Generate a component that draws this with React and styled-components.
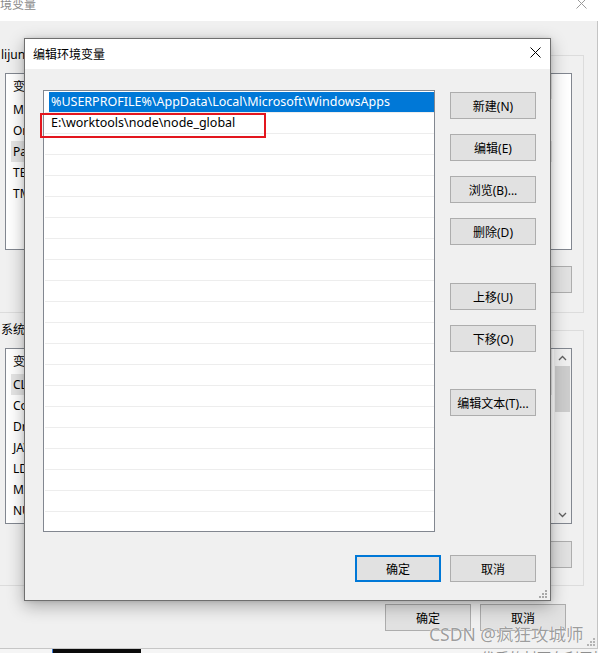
import React from 'react';
import styled, { createGlobalStyle } from 'styled-components';

const GlobalStyle = createGlobalStyle`
  html, body { margin: 0; padding: 0; background: #f0f0f0; }
  body {
    font-family: "Noto Sans", "Noto Sans CJK SC", sans-serif;
    font-size: 12px;
    color: #000;
  }
  #root { width: 598px; height: 653px; }
  * { box-sizing: border-box; }
`;

const Screen = styled.div`
  position: relative;
  width: 598px;
  height: 653px;
  overflow: hidden;
  display: flex;
  flex-direction: column;
  background: #f0f0f0;
`;

/* ---------- background window ---------- */
const BgWindow = styled.div`
  position: relative;
  height: 649px;
  flex: none;
  display: flex;
  flex-direction: column;
  border-bottom: 1px solid #c6c6c6;
  background: #f0f0f0;
`;

const BgTitleBar = styled.div`
  height: 21px;
  flex: none;
  background: #fff;
  display: flex;
  justify-content: space-between;
  align-items: flex-start;
  overflow: hidden;
`;

const BgTitleText = styled.div`
  margin-top: -3px;
  font-family: "Noto Sans CJK SC", sans-serif;
  font-size: 12px;
  line-height: 14px;
  color: #8a8a8a;
`;

const BgClose = styled.svg`
  margin-top: -2px;
  margin-right: 11px;
`;

const BgBody = styled.div`
  flex: 1;
  display: flex;
  flex-direction: column;
  padding-right: 13px;
  border-right: 1px solid #c4c4c4;
`;

const Group = styled.fieldset`
  margin: ${(p) => p.$mt}px 0 0 -10px;
  padding: 10px 11px ${(p) => p.$pb}px 14px;
  border: 1px solid #dcdcdc;
  min-inline-size: 0;
`;

const GroupLabel = styled.legend`
  padding: 0 2px;
  margin-left: -6px;
  font-size: 12px;
  line-height: 16px;
  white-space: nowrap;
`;

const BgList = styled.div`
  height: ${(p) => p.$h}px;
  border: 1px solid #828790;
  background: #fff;
  display: flex;
  overflow: hidden;
`;

const BgRows = styled.div`
  flex: 1;
  padding-left: 5px;
  display: flex;
  flex-direction: column;
  overflow: hidden;
`;

const BgHeader = styled.div`
  height: 25px;
  display: flex;
  flex: none;
`;

const HeaderCell = styled.div`
  width: ${(p) => p.$w}px;
  flex: none;
  padding-left: 2px;
  line-height: 25px;
  border-right: 1px solid #e5e5e5;
  white-space: nowrap;
`;

const BgRow = styled.div`
  height: 21px;
  flex: none;
  display: flex;
  align-items: center;
  width: 541px;
  background: ${(p) => (p.$sel ? '#e5e5e5' : 'transparent')};
`;

const BgCell = styled.div`
  width: ${(p) => p.$w}px;
  flex: none;
  padding-left: 2px;
  white-space: nowrap;
  overflow: hidden;
`;

const Scrollbar = styled.div`
  width: 17px;
  flex: none;
  background: #f0f0f0;
  display: flex;
  flex-direction: column;
  align-items: center;
`;

const ScrollArrow = styled.div`
  height: 17px;
  flex: none;
  display: flex;
  align-items: center;
  justify-content: center;
`;

const ScrollThumb = styled.div`
  width: 15px;
  height: 46px;
  flex: none;
  background: #cdcdcd;
`;

const ScrollTrack = styled.div`
  flex: 1;
`;

const BgButtonRow = styled.div`
  margin-top: ${(p) => p.$mt}px;
  display: flex;
  justify-content: flex-end;
  gap: 9px;
`;

const WinButton = styled.button`
  width: ${(p) => p.$w || 86}px;
  height: 27px;
  padding: 0;
  background: #e1e1e1;
  border: ${(p) => (p.$default ? '2px solid #0078d7' : '1px solid #adadad')};
  border-radius: 0;
  font-family: "Noto Sans", "Noto Sans CJK SC", sans-serif;
  font-size: 12px;
  color: #000;
  white-space: nowrap;
  margin-top: ${(p) => p.$mt || 0}px;
`;

const BgFooter = styled.div`
  margin-top: 18px;
  padding-right: 18px;
  display: flex;
  justify-content: flex-end;
  gap: 9px;
`;

/* ---------- bottom strip ---------- */
const BottomStrip = styled.div`
  flex: 1;
  display: flex;
  background: #f5f5f5;
  padding-left: 52px;
  overflow: hidden;
`;

const DarkBlock = styled.div`
  width: 89px;
  flex: none;
  background: #0b0b0b;
  border-left: 1px solid #3a7bd5;
`;

const HintText = styled.div`
  margin-left: 340px;
  margin-top: 0px;
  font-family: "Noto Sans CJK SC", sans-serif;
  font-size: 14px;
  line-height: 16px;
  color: #8e8e8e;
  white-space: nowrap;
`;

/* ---------- dialog ---------- */
const Dialog = styled.div`
  position: absolute;
  left: 24px;
  top: 38px;
  width: 527px;
  height: 563px;
  border: 1px solid #6f6f6f;
  background: #f0f0f0;
  display: flex;
  flex-direction: column;
  box-shadow: 0 5px 16px rgba(0, 0, 0, 0.3), 0 0 4px rgba(0, 0, 0, 0.12);
`;

const DlgTitleBar = styled.div`
  height: 30px;
  flex: none;
  background: #fff;
  display: flex;
  justify-content: space-between;
  align-items: center;
  padding-left: 8px;
`;

const DlgTitle = styled.div`
  font-family: "Noto Sans CJK SC", sans-serif;
  font-size: 12px;
  line-height: 16px;
  margin-top: -1px;
`;

const DlgClose = styled.svg`
  align-self: flex-start;
  margin-top: 8px;
  margin-right: 9px;
`;

const DlgBody = styled.div`
  flex: 1;
  display: flex;
  flex-direction: column;
  padding: 21px 14px 18px 18px;
`;

const DlgMain = styled.div`
  display: flex;
  gap: 15px;
  height: 442px;
`;

const PathList = styled.div`
  width: 392px;
  height: 442px;
  border: 1px solid #828790;
  background: #fff;
  padding-top: 1px;
  overflow: hidden;
  display: flex;
  flex-direction: column;
`;

const PathRow = styled.div`
  height: 21px;
  flex: none;
  margin-left: 1px;
  border-bottom: 1px solid #ededed;
  display: flex;
`;

const PathCell = styled.div`
  flex: 1;
  margin-left: 4px;
  padding-left: 2px;
  line-height: 20px;
  font-size: 12.5px;
  white-space: nowrap;
  overflow: hidden;
  background: ${(p) => (p.$sel ? '#0078d7' : 'transparent')};
  color: ${(p) => (p.$sel ? '#fff' : '#000')};
`;

const ButtonColumn = styled.div`
  display: flex;
  flex-direction: column;
  gap: 15px;
  padding-top: 2px;
`;

const DlgFooter = styled.div`
  margin-top: 23px;
  display: flex;
  justify-content: flex-end;
  gap: 9px;
`;

const Annotation = styled.div`
  position: absolute;
  left: 15px;
  top: 74px;
  width: 226px;
  height: 25px;
  border: 2px solid #e3161e;
`;

const Grip = styled.svg`
  position: absolute;
  right: 2px;
  bottom: 1px;
`;

const Watermark = styled.div`
  position: absolute;
  left: 429px;
  top: 624px;
  font-family: "Noto Sans", "Noto Sans CJK SC", sans-serif;
  font-size: 17.5px;
  line-height: 20px;
  color: rgba(140, 140, 140, 0.85);
  text-shadow: 0 0 1px #fff, 0 0 1px #fff;
  white-space: nowrap;
`;

const userVars = [
  ['MOZ_PLUGIN_PATH', 'C:\\Program Files\\Foxit Software\\plugins\\'],
  ['OneDrive', 'C:\\Users\\lijun\\OneDrive'],
  ['Path', '%USERPROFILE%\\AppData\\Local\\Microsoft\\WindowsApps;'],
  ['TEMP', '%USERPROFILE%\\AppData\\Local\\Temp'],
  ['TMP', '%USERPROFILE%\\AppData\\Local\\Temp'],
];

const sysVars = [
  ['CLASSPATH', '.;%JAVA_HOME%\\lib'],
  ['ComSpec', 'C:\\Windows\\system32\\cmd.exe'],
  ['DriverData', 'C:\\Windows\\System32\\Drivers\\DriverData'],
  ['JAVA_HOME', 'C:\\Program Files\\Java\\jdk1.8.0_201'],
  ['LD_LIBRARY_PATH', 'C:\\lib'],
  ['MAVEN_HOME', 'E:\\worktools\\maven'],
  ['NUMBER_OF_PROCESSORS', '8'],
];

const paths = [
  '%USERPROFILE%\\AppData\\Local\\Microsoft\\WindowsApps',
  'E:\\worktools\\node\\node_global',
];

function GripDots({ color }) {
  return (
    <g fill={color}>
      <rect x="7" y="1" width="2" height="2" />
      <rect x="4" y="4" width="2" height="2" />
      <rect x="7" y="4" width="2" height="2" />
      <rect x="1" y="7" width="2" height="2" />
      <rect x="4" y="7" width="2" height="2" />
      <rect x="7" y="7" width="2" height="2" />
    </g>
  );
}

function VarList({ h, rows, selIndex, scroll }) {
  return (
    <BgList $h={h}>
      <BgRows>
        <BgHeader>
          <HeaderCell $w={160}>变量</HeaderCell>
          <HeaderCell $w={381}>值</HeaderCell>
        </BgHeader>
        {rows.map((r, i) => (
          <BgRow key={r[0]} $sel={i === selIndex}>
            <BgCell $w={160}>{r[0]}</BgCell>
            <BgCell $w={381}>{r[1]}</BgCell>
          </BgRow>
        ))}
      </BgRows>
      {scroll && (
        <Scrollbar>
          <ScrollArrow>
            <svg width="9" height="6" viewBox="0 0 9 6">
              <path d="M1 5 L4.5 1.5 L8 5" fill="none" stroke="#606060" strokeWidth="1.3" />
            </svg>
          </ScrollArrow>
          <ScrollThumb />
          <ScrollTrack />
          <ScrollArrow>
            <svg width="9" height="6" viewBox="0 0 9 6">
              <path d="M1 1 L4.5 4.5 L8 1" fill="none" stroke="#606060" strokeWidth="1.3" />
            </svg>
          </ScrollArrow>
        </Scrollbar>
      )}
    </BgList>
  );
}

export default function App() {
  const rows = Array.from({ length: 22 }, (_, i) => paths[i] || '');
  return (
    <>
      <GlobalStyle />
      <Screen>
        <BgWindow>
          <BgTitleBar>
            <BgTitleText>境变量</BgTitleText>
            <BgClose width="11" height="11" viewBox="0 0 11 11">
              <path d="M0.5 0.5 L10.5 10.5 M10.5 0.5 L0.5 10.5" stroke="#9a9a9a" strokeWidth="1" />
            </BgClose>
          </BgTitleBar>
          <BgBody>
            <Group $mt={26} $pb={19}>
              <GroupLabel>lijun 的用户变量(U)</GroupLabel>
              <VarList h={177} rows={userVars} selIndex={2} />
              <BgButtonRow $mt={16}>
                <WinButton>新建(N)...</WinButton>
                <WinButton>编辑(E)...</WinButton>
                <WinButton>删除(D)</WinButton>
              </BgButtonRow>
            </Group>
            <Group $mt={9} $pb={17}>
              <GroupLabel>系统变量(S)</GroupLabel>
              <VarList h={176} rows={sysVars} selIndex={0} scroll />
              <BgButtonRow $mt={17}>
                <WinButton>新建(W)...</WinButton>
                <WinButton>编辑(I)...</WinButton>
                <WinButton>删除(L)</WinButton>
              </BgButtonRow>
            </Group>
            <BgFooter>
              <WinButton>确定</WinButton>
              <WinButton>取消</WinButton>
            </BgFooter>
          </BgBody>
          <Grip width="10" height="10" viewBox="0 0 10 10">
            <GripDots color="#b4b4b4" />
          </Grip>
        </BgWindow>
        <BottomStrip>
          <DarkBlock />
          <HintText>优质的封面有利于推荐</HintText>
        </BottomStrip>

        <Dialog>
          <DlgTitleBar>
            <DlgTitle>编辑环境变量</DlgTitle>
            <DlgClose width="11" height="11" viewBox="0 0 11 11">
              <path d="M0.5 0.5 L10.5 10.5 M10.5 0.5 L0.5 10.5" stroke="#000" strokeWidth="1" />
            </DlgClose>
          </DlgTitleBar>
          <DlgBody>
            <DlgMain>
              <PathList>
                {rows.map((p, i) => (
                  <PathRow key={i}>
                    <PathCell $sel={i === 0}>{p}</PathCell>
                  </PathRow>
                ))}
              </PathList>
              <ButtonColumn>
                <WinButton>新建(N)</WinButton>
                <WinButton>编辑(E)</WinButton>
                <WinButton>浏览(B)...</WinButton>
                <WinButton>删除(D)</WinButton>
                <WinButton $mt={23}>上移(U)</WinButton>
                <WinButton>下移(O)</WinButton>
                <WinButton $mt={22}>编辑文本(T)...</WinButton>
              </ButtonColumn>
            </DlgMain>
            <DlgFooter>
              <WinButton $default>确定</WinButton>
              <WinButton>取消</WinButton>
            </DlgFooter>
          </DlgBody>
          <Annotation />
          <Grip width="10" height="10" viewBox="0 0 10 10">
            <GripDots color="#a8a8a8" />
          </Grip>
        </Dialog>

        <Watermark>CSDN @疯狂攻城师</Watermark>
      </Screen>
    </>
  );
}
